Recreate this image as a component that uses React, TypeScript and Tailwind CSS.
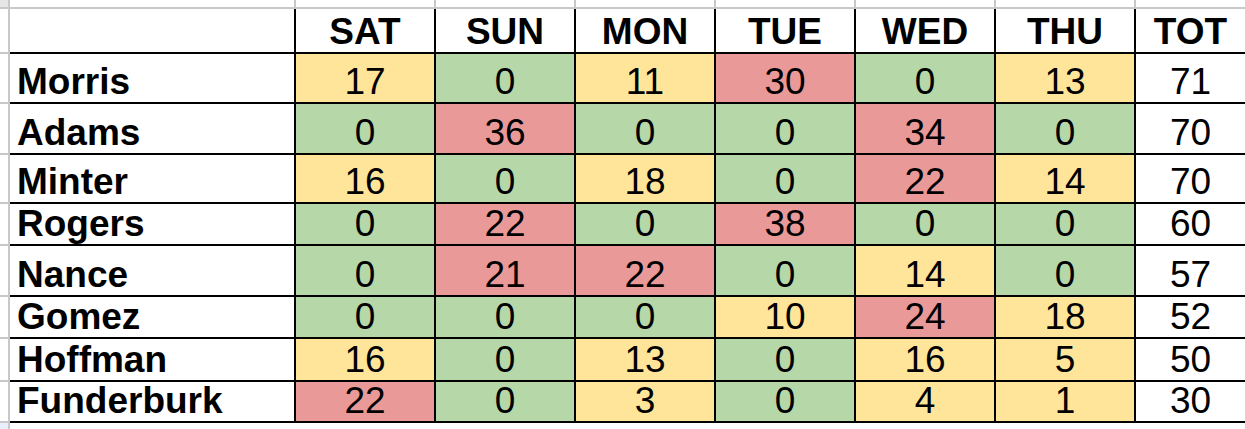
import React from "react";

type C = "y" | "g" | "r";
const rows: { name: string; vals: [number, C][]; tot: number; h: string }[] = [
  { name: "Morris", vals: [[17, "y"], [0, "g"], [11, "y"], [30, "r"], [0, "g"], [13, "y"]], tot: 71, h: "h-[50px]" },
  { name: "Adams", vals: [[0, "g"], [36, "r"], [0, "g"], [0, "g"], [34, "r"], [0, "g"]], tot: 70, h: "h-[51px]" },
  { name: "Minter", vals: [[16, "y"], [0, "g"], [18, "y"], [0, "g"], [22, "r"], [14, "y"]], tot: 70, h: "h-[49px]" },
  { name: "Rogers", vals: [[0, "g"], [22, "r"], [0, "g"], [38, "r"], [0, "g"], [0, "g"]], tot: 60, h: "h-[42px]" },
  { name: "Nance", vals: [[0, "g"], [21, "r"], [22, "r"], [0, "g"], [14, "y"], [0, "g"]], tot: 57, h: "h-[51px]" },
  { name: "Gomez", vals: [[0, "g"], [0, "g"], [0, "g"], [10, "y"], [24, "r"], [18, "y"]], tot: 52, h: "h-[42px]" },
  { name: "Hoffman", vals: [[16, "y"], [0, "g"], [13, "y"], [0, "g"], [16, "y"], [5, "y"]], tot: 50, h: "h-[43px]" },
  { name: "Funderburk", vals: [[22, "r"], [0, "g"], [3, "y"], [0, "g"], [4, "y"], [1, "y"]], tot: 30, h: "h-[41px]" },
];

const bg: Record<C, string> = {
  y: "bg-[#ffe599]",
  g: "bg-[#b6d7a8]",
  r: "bg-[#ea9999]",
};

const days = ["SAT", "SUN", "MON", "TUE", "WED", "THU"];

export default function App() {
  return (
    <div
      className="w-[1245px] h-[429px] overflow-hidden bg-white text-black"
      style={{ fontFamily: '"Liberation Sans", Arial, sans-serif' }}
    >
      {/* top gray strip */}
      <div className="flex h-[9px]">
        <div className="w-[10px] shrink-0 bg-[#e6e6e6] border-r-2 border-b-2 border-[#c8c8c8]" />
        <div className="w-[286px] shrink-0 border-r-2 border-b-2 border-[#c8c8c8]" />
        {days.map((d) => (
          <div key={d} className="w-[140px] shrink-0 border-r-2 border-b-2 border-[#c8c8c8]" />
        ))}
        <div className="flex-1 border-b-2 border-[#c8c8c8]" />
      </div>
      {/* header */}
      <div className="flex h-[45px]">
        <div className="w-[10px] shrink-0 border-r-2 border-b-2 border-[#c8c8c8]" />
        <div className="w-[286px] shrink-0 border-r-2 border-b-2 border-black" />
        {days.map((d) => (
          <div
            key={d}
            className="w-[140px] shrink-0 border-r-2 border-b-2 border-black flex items-end justify-center pb-[2px] text-[37px] leading-none font-bold"
          >
            {d}
          </div>
        ))}
        <div className="flex-1 border-b-2 border-black flex items-end justify-center pb-[2px] text-[37px] leading-none font-bold">
          TOT
        </div>
      </div>
      {rows.map((r) => (
        <div key={r.name} className={`flex ${r.h}`}>
          <div className="w-[10px] shrink-0 border-r-2 border-b-2 border-[#c8c8c8]" />
          <div className="w-[286px] shrink-0 border-r-2 border-b-2 border-black flex items-end pl-[7px] pb-[2px] text-[37px] leading-none font-bold">
            {r.name}
          </div>
          {r.vals.map(([v, c], i) => (
            <div
              key={i}
              className={`w-[140px] shrink-0 border-r-2 border-b-2 border-black flex items-end justify-center pb-[2px] text-[37px] leading-none ${bg[c]}`}
            >
              {v}
            </div>
          ))}
          <div className="flex-1 border-b-2 border-black flex items-end justify-center pb-[2px] text-[37px] leading-none">
            {r.tot}
          </div>
        </div>
      ))}
      <div className="flex h-[10px]">
        <div className="w-[10px] shrink-0 bg-[#e8f0fe] border-r-2 border-[#c8c8c8]" />
        <div className="flex-1" />
      </div>
    </div>
  );
}
